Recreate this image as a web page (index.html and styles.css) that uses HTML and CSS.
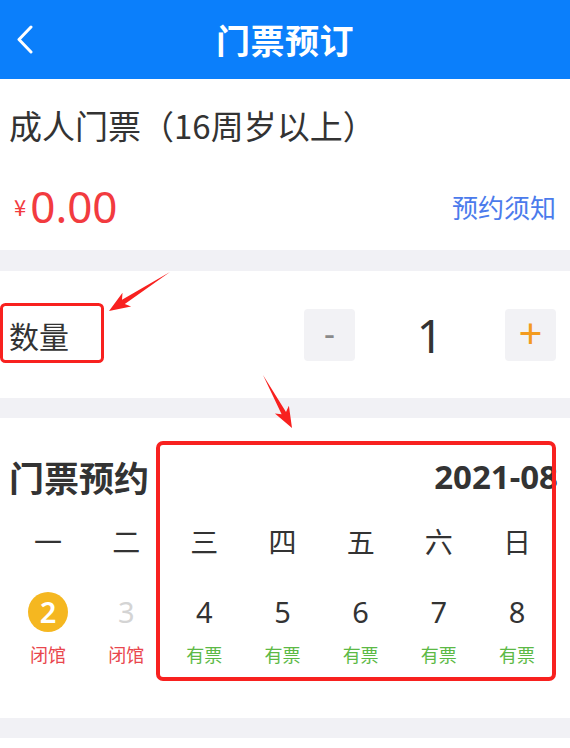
FILE: index.html
```html
<!DOCTYPE html>
<html lang="zh-CN">
<head>
    <meta charset="UTF-8">
    <meta name="viewport" content="width=device-width, initial-scale=1.0">
    <title>门票预订</title>
    <link rel="stylesheet" href="styles.css">
</head>
<body>
    <div class="page">
        <header class="top-bar">
            <a class="back" href="#">
                <svg width="18" height="29" viewBox="0 0 18 29">
                    <polyline points="15,2 3,14.5 15,27" fill="none" stroke="#fff" stroke-width="3" stroke-linecap="round" stroke-linejoin="round"/>
                </svg>
            </a>
            <h1>门票预订</h1>
            <span></span>
        </header>

        <section class="card ticket">
            <div class="ticket-name">成人门票（16周岁以上）</div>
            <div class="price-row">
                <div class="price"><span class="yen">¥</span><span class="amount">0.00</span></div>
                <a class="notice" href="#">预约须知</a>
            </div>
        </section>

        <section class="card quantity">
            <span class="label">数量</span>
            <div class="stepper">
                <button class="step minus">-</button>
                <span class="count">1</span>
                <button class="step plus">+</button>
            </div>
        </section>

        <section class="card booking">
            <div class="booking-head">
                <h2>门票预约</h2>
                <span class="month">2021-08</span>
            </div>
            <div class="week">
                <span>一</span><span>二</span><span>三</span><span>四</span><span>五</span><span>六</span><span>日</span>
            </div>
            <div class="days">
                <div class="day today"><span class="num">2</span><span class="state closed">闭馆</span></div>
                <div class="day past"><span class="num">3</span><span class="state closed">闭馆</span></div>
                <div class="day"><span class="num">4</span><span class="state open">有票</span></div>
                <div class="day"><span class="num">5</span><span class="state open">有票</span></div>
                <div class="day"><span class="num">6</span><span class="state open">有票</span></div>
                <div class="day"><span class="num">7</span><span class="state open">有票</span></div>
                <div class="day"><span class="num">8</span><span class="state open">有票</span></div>
            </div>
        </section>

        <section class="card filler"></section>

        <!-- annotation marks drawn over the screenshot -->
        <svg class="marks" width="570" height="748" viewBox="0 0 570 748">
            <rect x="1.5" y="304.5" width="101" height="57" rx="4" fill="none" stroke="#f8211f" stroke-width="3"/>
            <rect x="158" y="443" width="396" height="236" rx="5" fill="none" stroke="#f8211f" stroke-width="4"/>
            <polygon points="170,272 124.8,303.9 131.1,306.4 109,311 122.5,292.8 122,299.7" fill="#f8211f"/>
            <polygon points="263,375 281.6,414.3 274.9,413.4 292,428 288.9,405.8 286,411.9" fill="#f8211f"/>
        </svg>
    </div>
</body>
</html>
```

FILE: styles.css
```css
body {
    margin: 0;
    font-family: "Noto Sans CJK SC", "Noto Sans", sans-serif;
    background-color: #f1f1f5;
    color: #333;
}

.page {
    position: relative;
    width: 570px;
    height: 748px;
    overflow: hidden;
}

.top-bar {
    height: 79px;
    background-color: #0b7ffb;
    display: grid;
    grid-template-columns: 1fr auto 1fr;
    align-items: center;
    padding: 0 14px;
}

.back {
    display: flex;
    padding-left: 2px;
}

.top-bar h1 {
    margin: 0;
    color: #fff;
    font-size: 34px;
    font-weight: 700;
    letter-spacing: 0.5px;
}

.card {
    background-color: #fff;
    margin-bottom: 20px;
    padding: 0 14px 0 9px;
}

.ticket {
    margin-bottom: 21px;
    padding-bottom: 9px;
}

.ticket-name {
    height: 92px;
    line-height: 92px;
    font-size: 33px;
}

.price-row {
    height: 70px;
    display: flex;
    align-items: center;
    justify-content: space-between;
}

.price {
    display: flex;
    align-items: center;
    color: #f23b3f;
}

.yen {
    font-size: 22px;
    margin: 0 4px 0 5px;
}

.amount {
    font-family: "Noto Sans", sans-serif;
    font-size: 44px;
}

.notice {
    color: #4b7bec;
    font-size: 26px;
    text-decoration: none;
}

.quantity {
    height: 127px;
    display: flex;
    align-items: center;
    justify-content: space-between;
}

.label {
    font-size: 30px;
}

.stepper {
    display: flex;
    align-items: center;
}

.step {
    width: 51px;
    height: 52px;
    border: none;
    border-radius: 4px;
    background-color: #f2f2f5;
    font-family: "Noto Sans", sans-serif;
    line-height: 1;
    padding: 0 0 4px;
}

.minus {
    color: #8a8a8a;
    font-size: 34px;
}

.plus {
    color: #f39b1f;
    font-size: 42px;
}

.count {
    width: 150px;
    text-align: center;
    font-family: "Noto Sans", sans-serif;
    font-size: 46px;
}

.booking {
    padding-top: 34px;
    padding-bottom: 51px;
}

.booking-head {
    height: 48px;
    display: flex;
    align-items: center;
    justify-content: space-between;
}

.booking-head h2 {
    margin: 0;
    font-size: 35px;
    font-weight: 700;
}

.month {
    font-family: "Noto Sans", sans-serif;
    font-size: 33px;
    font-weight: 700;
    margin-right: -2px;
}

.week,
.days {
    display: grid;
    grid-template-columns: repeat(7, 1fr);
    text-align: center;
}

.week {
    height: 50px;
    line-height: 50px;
    margin-top: 16px;
    font-size: 28px;
}

.days {
    margin-top: 26px;
}

.day {
    display: flex;
    flex-direction: column;
    align-items: center;
}

.num {
    width: 40px;
    height: 40px;
    line-height: 40px;
    border-radius: 50%;
    font-family: "Noto Sans", sans-serif;
    font-size: 29px;
}

.today .num {
    background-color: #f5b720;
    color: #fff;
    font-weight: 600;
}

.past .num {
    color: #d4d4d4;
}

.state {
    margin-top: 9px;
    height: 26px;
    line-height: 26px;
    font-size: 18px;
}

.closed {
    color: #e9464d;
}

.open {
    color: #5cb945;
}

.filler {
    height: 10px;
    margin-bottom: 0;
}

.marks {
    position: absolute;
    top: 0;
    left: 0;
    pointer-events: none;
}
```
